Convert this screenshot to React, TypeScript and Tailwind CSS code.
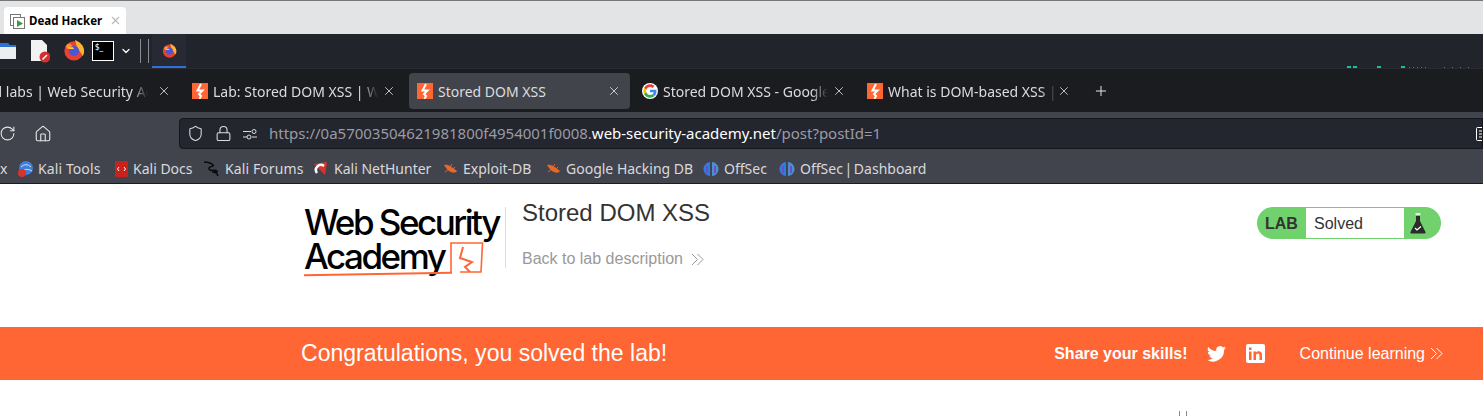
import { ChevronDown, Home, Lock, Plus, RotateCw, Shield, X } from 'lucide-react';

const noto = "font-['Noto_Sans',sans-serif]";
const arial = "font-['Liberation_Sans',Arial,sans-serif]";

function BurpIcon() {
  return (
    <svg width="16" height="16" viewBox="0 0 16 16" className="shrink-0">
      <rect width="16" height="16" fill="#ff6633" />
      <path d="M9 1 5.500 7.500h5L7 11l2 2-1.500 3" fill="none" stroke="#fff" strokeWidth="2" />
    </svg>
  );
}

function GoogleIcon() {
  return (
    <svg width="16" height="16" viewBox="0 0 48 48" className="shrink-0">
      <circle cx="24" cy="24" r="24" fill="#fff" />
      <path fill="#ea4335" d="M24 12c3 0 5.600 1 7.700 3l5.700-5.700C33.900 6 29.400 4 24 4 16.200 4 9.500 8.500 6.200 15l6.700 5.200C14.500 15.400 18.800 12 24 12z" />
      <path fill="#4285f4" d="M43.600 24.500c0-1.400-.1-2.700-.4-4H24v7.600h11c-.5 2.500-1.900 4.600-4 6l6.400 5c3.800-3.500 6.200-8.600 6.200-14.600z" />
      <path fill="#fbbc05" d="M12.900 28.800A12 12 0 0 1 12.900 20.200L6.200 15a20 20 0 0 0 0 18z" />
      <path fill="#34a853" d="M24 44c5.400 0 9.900-1.800 13.400-4.900l-6.400-5c-1.800 1.200-4.100 1.900-7 1.900-5.200 0-9.500-3.400-11.100-8.200L6.200 33C9.500 39.500 16.200 44 24 44z" />
    </svg>
  );
}

function FirefoxIcon({ size }: { size: number }) {
  return (
    <svg width={size} height={size} viewBox="0 0 24 24" className="shrink-0">
      <circle cx="12" cy="13" r="10.500" fill="#e8412f" />
      <path d="M13 1c5 2 10 6 10 12 0 2-.5 4-1.500 5.500L15 8z" fill="#ffb52e" />
      <path d="M3 8c1-2 3-3 5-3l4 5-7 1z" fill="#ff9030" />
      <circle cx="12" cy="13" r="5.500" fill="#4a55d8" />
      <path d="M5 9h6l1 2H7z" fill="#ffc93a" />
    </svg>
  );
}

function BrowserTab({ title, icon, active, textClass }: { title: string; icon: React.ReactNode; active?: boolean; textClass: string }) {
  return (
    <div className={`flex h-[36px] w-[221px] shrink-0 items-center rounded-[4px] pl-2 pr-[9px] ${active ? 'bg-[#42444b]' : ''}`}>
      {icon}
      <span
        className={`overflow-hidden whitespace-nowrap text-[14px] text-[#dcdcdf] ${noto} ${textClass}`}
        style={{ maskImage: active ? undefined : 'linear-gradient(to right, black 90%, transparent 100%)' }}
      >
        {title}
      </span>
      <X className="ml-auto h-[14px] w-[14px] text-[#e4e4e7]" strokeWidth={1.4} />
    </div>
  );
}

function Bookmark({ icon, label, textClass }: { icon: React.ReactNode; label: string; textClass: string }) {
  return (
    <div className="flex items-center gap-[5px]">
      {icon}
      <span className={`whitespace-nowrap text-[14px] text-[#d9d9dc] ${noto} ${textClass}`}>{label}</span>
    </div>
  );
}

function OffSecIcon() {
  return (
    <svg width="16" height="16" viewBox="0 0 16 16" className="shrink-0">
      <path d="M7 1C3 1.500 .5 4.500.5 8s2.500 6.500 6.500 7z" fill="#2b7de0" />
      <path d="M9 1c4 .5 6.500 3.500 6.500 7s-2.500 6.500-6.500 7z" fill="#4a8fd0" />
      <path d="M3 5h2v7H3zM11 5h2v7h-2z" fill="#6a4fc8" />
    </svg>
  );
}

function BugIcon() {
  return (
    <svg width="15" height="15" viewBox="0 0 15 15" className="shrink-0">
      <path d="M1 4c4-1 8 2 13 6-1 2-4 2-6 1C5 10 3 7 1 4z" fill="#e8672a" />
      <path d="M2 11l4-3M9 3 7 6M12 6l-2 2" stroke="#e8672a" strokeWidth="1" />
    </svg>
  );
}

function DoubleChevron({ className }: { className: string }) {
  return (
    <svg width="13" height="13" viewBox="0 0 13 13" fill="none" stroke="currentColor" strokeWidth="1" className={className}>
      <path d="M1 1l5.500 5.500L1 12M6.500 1 12 6.500 6.500 12" />
    </svg>
  );
}

export default function App() {
  return (
    <div className="h-[416px] w-[1483px] overflow-hidden bg-white">
      {/* VM window tab */}
      <div className="h-[34px] border-t border-[#777] bg-[#e3e4e6] pl-1 pt-[6px]">
        <div className="flex h-[27px] w-[122px] items-center rounded-t-[4px] bg-white pl-[6px]">
          <svg width="16" height="16" viewBox="0 0 16 16" className="shrink-0">
            <rect x="0.500" y="1.500" width="10" height="11" fill="none" stroke="#777" />
            <rect x="3.500" y="4.500" width="11" height="11" fill="#fff" stroke="#777" />
            <path d="M7 7v7l6-3.500z" fill="#3c9a3c" />
          </svg>
          <span className={`ml-[3px] whitespace-nowrap text-[11.500px] font-bold text-black ${noto}`}>Dead Hacker</span>
          <X className="ml-auto mr-[4px] h-[13px] w-[13px] text-[#b8b8b8]" strokeWidth={2} />
        </div>
      </div>

      {/* Taskbar */}
      <div className="flex h-[34px] items-center bg-[#22242c]">
        <svg width="16" height="18" viewBox="0 0 16 18" className="shrink-0">
          <path d="M0 1h8l2 2h6v4H0z" fill="#2f6fd8" />
          <rect y="5" width="16" height="12" fill="#eceff2" />
        </svg>
        <svg width="20" height="24" viewBox="0 0 20 24" className="ml-[14px] shrink-0">
          <path d="M1 1h11l5 5v16H1z" fill="#f2f2f2" />
          <circle cx="15" cy="18" r="5.500" fill="#d32f2f" />
          <path d="M12.500 20.500l4.500-4.500" stroke="#fff" strokeWidth="1.500" />
        </svg>
        <span className="ml-[13px] mt-[-2px]"><FirefoxIcon size={22} /></span>
        <div className={`ml-[7px] h-[20px] w-[22px] shrink-0 border border-white bg-black pl-[2px] text-[8px] leading-[10px] text-white ${noto}`}>$_</div>
        <ChevronDown className="ml-[6px] h-[12px] w-[12px] text-white" strokeWidth={2.5} />
        <div className="ml-[8px] h-[24px] w-[1px] shrink-0 bg-[#8a8c92]" />
        <div className="ml-[7px] h-[24px] w-[1px] shrink-0 bg-[#8a8c92]" />
        <div className="ml-[3px] flex h-[34px] w-[34px] shrink-0 items-center justify-center border-b-2 border-[#2f6fd8] bg-[#282a33]">
          <FirefoxIcon size={15} />
        </div>
        <div className="ml-[1161px] flex h-full items-end">
          <div className="h-[2px] w-[4px] bg-[#1abc9c]" />
          <div className="ml-[2px] h-[2px] w-[4px] bg-[#1abc9c]" />
          <div className="ml-[20px] h-[2px] w-[4px] bg-[#1abc9c]" />
          <div className="ml-[20px] h-[2px] w-[4px] bg-[#1abc9c]" />
          <div className="ml-[4px] flex gap-[3px]">
            <div className="h-[1px] w-[1px] bg-[#5a6aa0]" />
            <div className="h-[1px] w-[1px] bg-[#5a6aa0]" />
            <div className="h-[1px] w-[1px] bg-[#5a6aa0]" />
            <div className="h-[1px] w-[1px] bg-[#5a6aa0]" />
            <div className="h-[1px] w-[1px] bg-[#5a6aa0]" />
          </div>
          <div className="ml-[18px] flex gap-[7px]">
            <div className="h-[1px] w-[1px] bg-[#5a6aa0]" />
            <div className="h-[1px] w-[1px] bg-[#5a6aa0]" />
            <div className="h-[1px] w-[1px] bg-[#5a6aa0]" />
            <div className="h-[1px] w-[1px] bg-[#5a6aa0]" />
          </div>
        </div>
      </div>

      {/* Browser tabs */}
      <div className="ml-[-41px] flex h-[44px] items-center gap-[4px] border-t border-[#2a2c34] bg-[#1b1c20] pt-[1px]">
        <BrowserTab title="All labs | Web Security Academy" textClass="ml-[3px] w-[162px]" icon={<BurpIcon />} />
        <BrowserTab title="Lab: Stored DOM XSS | Web Security" textClass="ml-[5px] w-[165px]" icon={<BurpIcon />} />
        <BrowserTab title="Stored DOM XSS" active textClass="ml-[5px] w-[165px]" icon={<BurpIcon />} />
        <BrowserTab title="Stored DOM XSS - Google Search" textClass="ml-[5px] w-[165px]" icon={<GoogleIcon />} />
        <BrowserTab title="What is DOM-based XSS | Web" textClass="ml-[5px] w-[170px]" icon={<BurpIcon />} />
        <Plus className="ml-[9px] h-[16px] w-[16px] text-[#e4e4e7]" strokeWidth={1.5} />
      </div>

      {/* Nav bar */}
      <div className="flex h-[38px] items-center bg-[#42444d] pt-[5px]">
        <RotateCw className="ml-[-1px] h-[17px] w-[17px] text-[#e4e4e7]" strokeWidth={1.5} />
        <Home className="ml-[18px] h-[18px] w-[18px] text-[#e4e4e7]" strokeWidth={1.5} />
        <div className={`ml-[127px] flex h-[31px] flex-1 items-center rounded-l-[4px] border border-[#16171b] bg-[#23252f] pl-[7px] text-[15px] tracking-[-0.01px] ${noto}`}>
          <Shield className="h-[17px] w-[17px] text-[#dcdcdf]" strokeWidth={1.5} />
          <Lock className="ml-[11px] h-[17px] w-[17px] text-[#dcdcdf]" strokeWidth={1.5} />
          <svg width="16" height="16" viewBox="0 0 16 16" fill="none" stroke="#dcdcdf" className="ml-[10px] shrink-0">
            <path d="M1 5.500h8M1 11h4M10 11h5" />
            <circle cx="12" cy="5.500" r="2" />
            <circle cx="7" cy="11" r="2" />
          </svg>
          <span className="ml-[11px] whitespace-nowrap text-[#9b9ca3]">
            https://0a57003504621981800f4954001f0008.<span className="text-white">web-security-academy.net</span>/post?postId=1
          </span>
          <svg width="6" height="14" viewBox="0 0 6 14" fill="none" stroke="#fff" className="ml-auto shrink-0">
            <path d="M6 .5H1.500a1 1 0 0 0-1 1v11a1 1 0 0 0 1 1H6M3 4h3M3 7h3M3 10h3" />
          </svg>
        </div>
      </div>

      {/* Bookmarks */}
      <div className="flex h-[34px] items-center gap-[12px] border-b border-[#1b1c20] bg-[#42444d] pt-[4px]">
        <span className={`w-[6px] text-[14px] text-[#d9d9dc] ${noto}`}>x</span>
        <Bookmark
          label="Kali Tools"
          textClass="w-[65px] tracking-[0.1px]"
          icon={
            <svg width="15" height="16" viewBox="0 0 15 16" className="shrink-0">
              <circle cx="8" cy="7" r="7" fill="#3f7fd6" />
              <path d="M3 6c3-3 7-3 10 0M6 9c2-1 5-1 8 1" stroke="#cfe0f5" fill="none" />
              <circle cx="4" cy="12" r="4" fill="#d9342b" />
            </svg>
          }
        />
        <Bookmark
          label="Kali Docs"
          textClass="w-[59px]"
          icon={
            <svg width="13" height="16" viewBox="0 0 13 16" className="shrink-0">
              <rect width="13" height="16" rx="1" fill="#c9221c" />
              <path d="M4 6 2.500 8 4 10M9 6l1.500 2L9 10" stroke="#fff" fill="none" />
            </svg>
          }
        />
        <Bookmark
          label="Kali Forums"
          textClass="w-[76px] tracking-[0.1px]"
          icon={
            <svg width="16" height="16" viewBox="0 0 16 16" fill="none" stroke="#0b0b0d" strokeWidth="1.500" className="shrink-0">
              <path d="M0 1c5 0 7 1 9 3S4 5 5 8s7 0 8 2-2 1-3-1M8 11c3 0 5 1 6 4" />
            </svg>
          }
        />
        <Bookmark
          label="Kali NetHunter"
          textClass="w-[97px]"
          icon={
            <svg width="16" height="16" viewBox="0 0 16 16" className="shrink-0">
              <path d="M1 3l13-2-2 13z" fill="#d9342b" />
              <path d="M4 12a5 5 0 0 1 7-7" stroke="#fff" strokeWidth="2.500" fill="none" />
            </svg>
          }
        />
        <Bookmark label="Exploit-DB" textClass="w-[71px]" icon={<BugIcon />} />
        <Bookmark label="Google Hacking DB" textClass="w-[125px]" icon={<BugIcon />} />
        <Bookmark label="OffSec" textClass="w-[43px]" icon={<OffSecIcon />} />
        <Bookmark label="OffSec | Dashboard" textClass="[word-spacing:-2px]" icon={<OffSecIcon />} />
      </div>

      {/* Lab header */}
      <div className={`flex h-[143px] pl-[304px] pr-[42px] pt-[16px] ${arial}`}>
        <div className="relative h-[72px] w-[196px] shrink-0 pt-[5px] font-['Inter',sans-serif] text-[35px] font-medium leading-[34px] tracking-[-2.500px] text-black">
          <div className="whitespace-nowrap">Web Security</div>
          <div className="whitespace-nowrap">Academy</div>
          <svg width="46" height="36" viewBox="0 0 46 36" fill="none" stroke="#ff6633" strokeWidth="1.600" className="absolute left-[137px] top-[41px]">
            <path d="M10 31.500 10 2h31.500L40 31H19" />
            <path d="M22 6l-3 11 12 4-7 5 5 5" strokeWidth="2" />
          </svg>
          <div className="absolute left-0 top-[73px] h-[2px] w-[148px] -rotate-1 bg-[#ff6633]" />
        </div>
        <div className="ml-[5px] mt-[7px] h-[61px] w-[1px] bg-[#dddddd]" />
        <div className="ml-[16px] min-w-0">
          <h2 className="mt-[-1px] text-[24px] leading-[28px] text-[#333]">Stored DOM XSS</h2>
          <div className="mt-[19px] flex items-center text-[16px] leading-[26px] text-[#999]">
            Back to lab description
            <DoubleChevron className="ml-[8px]" />
          </div>
        </div>
        <div className="ml-auto mt-[7px] flex h-[32px] w-[184px] items-center rounded-full bg-[#70d16d]">
          <span className="ml-[8px] w-[41px] pt-[2px] text-[16px] font-bold text-[#333]">LAB</span>
          <div className="flex h-[30px] w-[98px] items-center bg-white pl-[8px] pt-[1px] text-[16px] text-[#333]">Solved</div>
          <svg width="16" height="24" viewBox="0 0 16 24" className="ml-[6px] shrink-0">
            <path d="M6 5h4v5l5.500 11a1 1 0 0 1-1 1.500h-13a1 1 0 0 1-1-1.500L6 10z" fill="#2b2b2b" />
            <path d="M5.500 3h5" stroke="#fff" strokeWidth="1.500" />
            <path d="M5 17l2 2 4-3.500" stroke="#fff" strokeWidth="1.200" fill="none" />
          </svg>
        </div>
      </div>

      {/* Solved banner */}
      <div className={`flex h-[53px] items-center bg-[#ff6633] pl-[301px] text-white ${arial}`}>
        <h4 className="mt-[-1px] whitespace-nowrap text-[23.040px]">Congratulations, you solved the lab!</h4>
        <span className="ml-[387px] whitespace-nowrap text-[16px] font-bold">Share your skills!</span>
        <svg width="19" height="16" viewBox="0 0 24 20" fill="#fff" className="ml-[19px] shrink-0">
          <path d="M24 2.400a9.800 9.800 0 0 1-2.800.8A4.900 4.900 0 0 0 23.300.5a9.800 9.800 0 0 1-3.100 1.200 4.900 4.900 0 0 0-8.400 4.500A14 14 0 0 1 1.700 1a4.900 4.900 0 0 0 1.500 6.600 4.900 4.900 0 0 1-2.200-.6c0 2.300 1.600 4.400 3.900 4.900a4.900 4.900 0 0 1-2.200.1 4.900 4.900 0 0 0 4.600 3.400A9.900 9.900 0 0 1 0 17.400 14 14 0 0 0 21.500 5c1-.7 1.900-1.600 2.500-2.600z" />
        </svg>
        <svg width="19" height="19" viewBox="0 0 19 19" className="ml-[20px] shrink-0">
          <rect width="19" height="19" rx="2" fill="#fff" />
          <path d="M3 7.500h2.500V16H3zM3 3.500h2.500V6H3zM7.500 7.500H10v1.200c.6-1 1.600-1.400 2.700-1.400 2.200 0 3.300 1.300 3.300 3.700V16h-2.500v-4.600c0-1.300-.5-2-1.600-2S10 10.200 10 11.400V16H7.500z" fill="#ff6633" />
        </svg>
        <span className="ml-[35px] whitespace-nowrap text-[16px]">Continue learning</span>
        <DoubleChevron className="ml-[5px]" />
      </div>

      <div className="ml-[1179px] mt-[31px] flex h-[5px] gap-[6px]">
        <div className="w-[1px] bg-[#8a8494]" />
        <div className="w-[1px] bg-[#8a8494]" />
      </div>
    </div>
  );
}
